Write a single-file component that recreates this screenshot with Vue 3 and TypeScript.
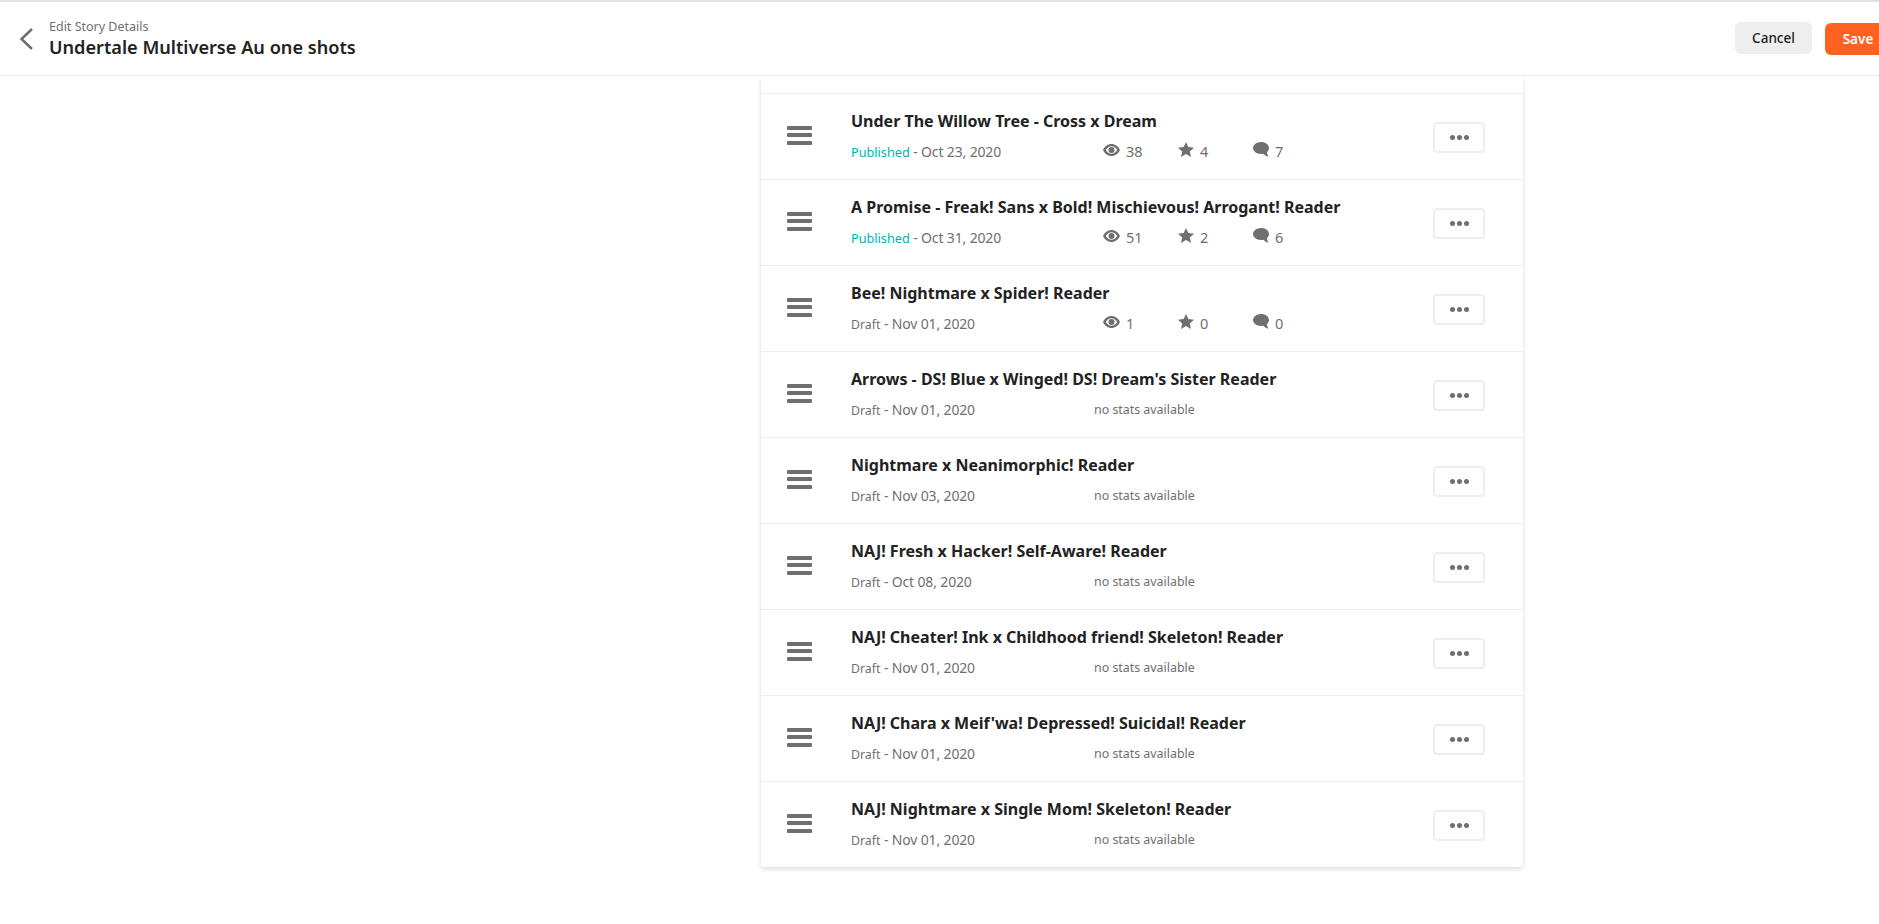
<script setup lang="ts">
interface Part { title: string; status: 'Published' | 'Draft'; date: string; stats?: [number, number, number] }
const parts: Part[] = [
  { title: 'Under The Willow Tree - Cross x Dream', status: 'Published', date: 'Oct 23, 2020', stats: [38, 4, 7] },
  { title: 'A Promise - Freak! Sans x Bold! Mischievous! Arrogant! Reader', status: 'Published', date: 'Oct 31, 2020', stats: [51, 2, 6] },
  { title: 'Bee! Nightmare x Spider! Reader', status: 'Draft', date: 'Nov 01, 2020', stats: [1, 0, 0] },
  { title: "Arrows - DS! Blue x Winged! DS! Dream's Sister Reader", status: 'Draft', date: 'Nov 01, 2020' },
  { title: 'Nightmare x Neanimorphic! Reader', status: 'Draft', date: 'Nov 03, 2020' },
  { title: 'NAJ! Fresh x Hacker! Self-Aware! Reader', status: 'Draft', date: 'Oct 08, 2020' },
  { title: 'NAJ! Cheater! Ink x Childhood friend! Skeleton! Reader', status: 'Draft', date: 'Nov 01, 2020' },
  { title: "NAJ! Chara x Meif'wa! Depressed! Suicidal! Reader", status: 'Draft', date: 'Nov 01, 2020' },
  { title: 'NAJ! Nightmare x Single Mom! Skeleton! Reader', status: 'Draft', date: 'Nov 01, 2020' },
]
</script>

<template>
  <div class="page">
    <header class="top">
      <svg class="back" width="16" height="24" viewBox="0 0 16 24" fill="none"><path d="M14 2 3.500 12 14 22" stroke="#6f6f6f" stroke-width="2.500" /></svg>
      <div class="heading">
        <div class="eyebrow">Edit Story Details</div>
        <div class="story">Undertale Multiverse Au one shots</div>
      </div>
      <button class="btn cancel">Cancel</button>
      <button class="btn save">Save</button>
    </header>
    <main class="card">
      <div class="stub"></div>
      <div v-for="p in parts" :key="p.title" class="row">
        <div class="grip"><i></i><i></i><i></i></div>
        <div class="info">
          <div class="title">{{ p.title }}</div>
          <div class="meta">
            <div class="when">
              <span :class="p.status === 'Published' ? 'pub' : 'draft'">{{ p.status }}</span><span class="date"> - {{ p.date }}</span>
            </div>
            <div v-if="p.stats" class="stats">
              <span class="stat">
                <svg class="lift" width="17" height="12" viewBox="0 0 17 12"><path fill="#6f6f6f" fill-rule="evenodd" d="M8.500 0C4.700 0 1.600 2.400 0 6c1.600 3.600 4.700 6 8.500 6s6.900-2.400 8.500-6C15.400 2.400 12.300 0 8.500 0Zm0 2.200c2.300 0 4.300 1.500 5.700 3.800-1.400 2.300-3.400 3.800-5.700 3.800S4.200 8.300 2.800 6C4.200 3.700 6.200 2.200 8.500 2.200Zm0 .8a3 3 0 1 0 0 6 3 3 0 0 0 0-6Z"/></svg>
                {{ p.stats[0] }}
              </span>
              <span class="stat">
                <svg class="lift" width="16" height="15" viewBox="0 0 16 15"><path fill="#6f6f6f" d="m8 0 2.300 5.100 5.700.6-4.200 3.700 1.200 5.600L8 12.100 3 15l1.200-5.600L0 5.700l5.700-.6Z"/></svg>
                {{ p.stats[1] }}
              </span>
              <span class="stat">
                <svg class="lift" width="16" height="15" viewBox="0 0 16 15"><path fill="#6f6f6f" d="M8 0c4.400 0 8 2.600 8 6 0 1.700-.8 3.100-2 4.100.1 1.700.6 3.300 1.400 4.700-2-.4-3.700-1.500-4.900-3-.8.200-1.600.2-2.500.2-4.400 0-8-2.800-8-6S3.600 0 8 0Z"/></svg>
                {{ p.stats[2] }}
              </span>
            </div>
            <div v-else class="none">no stats available</div>
          </div>
        </div>
        <button class="more"><i></i><i></i><i></i></button>
      </div>
    </main>
  </div>
</template>

<style>
html, body { margin: 0; background: #fff; overflow: hidden; }
</style>

<style scoped>
.page {
  width: 1879px; height: 924px; overflow: hidden;
  font-family: "Noto Sans", "Liberation Sans", sans-serif;
  color: #222;
}
.top {
  position: relative; z-index: 1; background: #fff;
  width: 1900px; height: 76px; box-sizing: border-box;
  display: flex; align-items: center;
  padding: 0 0 0 18px;
  border-top: 2px solid #e2e2e2;
  border-bottom: 1px solid #eee;
}
.back { margin-right: 15px; }
.heading { flex: 1; }
.eyebrow { font-size: 12.500px; line-height: 16px; color: #6f6f6f; }
.story { font-size: 18.150px; font-weight: 600; line-height: 24px; color: #222; }
.btn { height: 32px; border: 0; border-radius: 6px; font: inherit; font-size: 13.500px; padding: 0; }
.cancel { width: 77px; background: #eee; color: #222; font-weight: 500; margin-right: 13px; margin-bottom: 1px; }
.save { width: 75px; background: #ff6122; color: #fff; font-weight: 600; padding-right: 9px; margin-top: 1px; }
.card {
  margin-left: 761px; width: 762px; background: #fff;
  border-radius: 0 0 4px 4px;
  box-shadow: 0 2px 5px rgba(0,0,0,.14);
}
.stub { height: 17px; }
.row {
  height: 86px; box-sizing: border-box; border-top: 1px solid #eee;
  display: flex; align-items: center; padding: 0 38px 0 26px;
}
.grip { width: 25px; margin: 0 39px 3px 0; display: flex; flex-direction: column; gap: 3.500px; }
.grip i { display: block; height: 4px; background: #6f6f6f; border-radius: 1px; }
.info { flex: 1; min-width: 0; padding-bottom: 3px; }
.title { font-size: 16px; font-weight: 700; line-height: 22px; color: #222; }
.meta { display: flex; align-items: center; margin-top: 9px; height: 20px; }
.when { width: 243px; color: #6f6f6f; }
.pub { font-size: 12.700px; color: #00b2b2; }
.draft { font-size: 12.300px; color: #6f6f6f; }
.date { font-size: 14px; letter-spacing: -.15px; }
.stats { display: flex; color: #6f6f6f; font-size: 14.500px; padding-left: 9px; }
.stat { width: 75px; display: flex; align-items: center; gap: 6px; }
.lift { margin-top: -2px; }
.none { font-size: 12.400px; color: #6f6f6f; padding-top: 2px; }
.more {
  width: 52px; height: 31px; box-sizing: border-box; padding: 0; margin-top: 1px;
  border: 2px solid #eee; border-radius: 4px; background: #fff;
  display: flex; align-items: center; justify-content: center; gap: 2px;
}
.more i { width: 5px; height: 5px; border-radius: 50%; background: #6f6f6f; }
</style>
